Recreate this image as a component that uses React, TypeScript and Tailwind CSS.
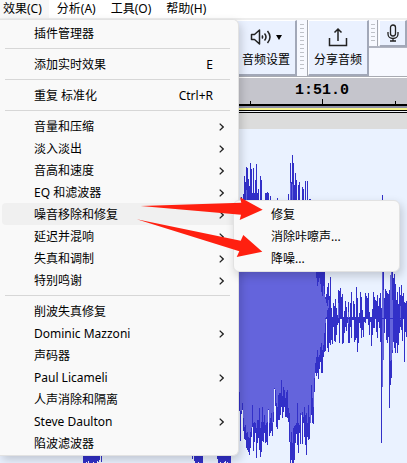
import React from "react";

type Entry = { label: string; shortcut?: string; submenu?: boolean; active?: boolean };

const groups: Entry[][] = [
  [{ label: "插件管理器" }],
  [{ label: "添加实时效果", shortcut: "E" }],
  [{ label: "重复 标准化", shortcut: "Ctrl+R" }],
  [
    { label: "音量和压缩", submenu: true },
    { label: "淡入淡出", submenu: true },
    { label: "音高和速度", submenu: true },
    { label: "EQ 和滤波器", submenu: true },
    { label: "噪音移除和修复", submenu: true, active: true },
    { label: "延迟并混响", submenu: true },
    { label: "失真和调制", submenu: true },
    { label: "特别鸣谢", submenu: true },
  ],
  [
    { label: "削波失真修复" },
    { label: "Dominic Mazzoni", submenu: true },
    { label: "声码器" },
    { label: "Paul Licameli", submenu: true },
    { label: "人声消除和隔离" },
    { label: "Steve Daulton", submenu: true },
    { label: "陷波滤波器" },
  ],
];

// Waveform samples: one entry per pixel column, starting at START.
const START = 239;
const MID = 318;
const peakTop = [
  200, 200, 197, 200, 194, 176, 182, 167, 168, 179, 186, 163, 169, 193, 168, 193, 180, 164, 193, 189, 200, 176, 180, 200,
  200, 200, 193, 193, 192, 193, 200, 196, 200, 200, 200, 200, 200, 200, 198, 200, 200, 200, 200, 200, 200, 200, 200, 200,
  200, 194, 200, 163, 182, 155, 163, 185, 173, 180, 200, 185, 182, 200, 200, 187, 189, 200, 181, 200, 181, 200, 199, 199,
  210, 220, 230, 240, 250, 260, 262, 265, 266, 266, 268, 270, 266, 272, 297, 294, 287, 283, 296, 277, 308, 317, 303, 306,
  299, 308, 315, 290, 291, 288, 297, 294, 317, 311, 301, 307, 317, 302, 317, 303, 292, 317, 301, 304, 317, 287, 298, 317,
  313, 292, 297, 310, 317, 317, 293, 296, 298, 293, 312, 317, 317, 309, 292, 297, 300, 301, 295, 306, 298, 293, 308, 195,
  272, 298, 289, 291, 293, 294, 290, 285, 270, 270, 278, 274, 284, 300, 292, 304, 287, 295, 285, 296, 293, 302, 303, 301,
];
const peakBottom = [
  411, 441, 414, 410, 431, 439, 440, 448, 450, 452, 455, 448, 437, 427, 451, 442, 433, 458, 443, 438, 450, 457, 452, 441,
  442, 433, 443, 442, 445, 410, 436, 433, 431, 436, 422, 389, 406, 427, 429, 420, 420, 415, 407, 418, 412, 407, 417, 417,
  418, 422, 442, 463, 460, 463, 463, 460, 443, 434, 445, 453, 433, 444, 415, 444, 423, 437, 445, 455, 437, 440, 439, 400,
  415, 423, 424, 392, 373, 376, 373, 379, 369, 362, 373, 373, 357, 352, 351, 319, 348, 352, 343, 345, 340, 344, 327, 341,
  342, 335, 325, 323, 343, 319, 319, 344, 343, 333, 327, 331, 323, 343, 343, 327, 338, 320, 320, 342, 340, 338, 352, 343,
  323, 328, 338, 330, 337, 322, 323, 319, 319, 325, 335, 322, 346, 335, 328, 328, 319, 332, 338, 322, 328, 342, 443, 374,
  357, 333, 319, 340, 343, 337, 408, 385, 378, 353, 342, 348, 353, 343, 353, 345, 333, 327, 330, 341, 319, 362, 332, 337,
];
const rmsBottom = [
  392, 411, 411, 403, 418, 427, 425, 433, 432, 437, 438, 432, 428, 405, 423, 422, 423, 428, 420, 420, 408, 428, 422, 407,
  422, 415, 425, 423, 422, 409, 423, 418, 413, 423, 412, 388, 390, 403, 407, 395, 393, 393, 380, 396, 387, 390, 398, 392,
  390, 408, 413, 442, 432, 443, 428, 426, 425, 423, 403, 423, 425, 413, 415, 412, 417, 407, 415, 413, 423, 405, 417, 423,
  385, 398, 407, 378, 363, 357, 350, 357, 355, 347, 343, 350, 345, 333, 323, 317, 310, 308, 306,
];
const rmsTop = [278, 286, 282, 278, 284, 292, 296, 286, 294, 299, 303, 306, 300, 306, 305];

const peaks = peakTop.map((t, i) => `M${START + i} ${t}h1V${peakBottom[i]}h-1z`).join("");
const rms = rmsBottom
  .map((b, i) => {
    const top = i < 77 ? 200 : rmsTop[i - 77] ?? 305;
    return `M${START + i} ${top}h1V${b}h-1z`;
  })
  .join("");
const earlier = [
  [83, 465], [84, 463], [85, 466], [86, 462], [87, 464], [88, 461], [89, 466], [90, 465], [91, 463], [92, 466],
  [93, 462], [94, 464], [95, 463], [96, 466], [97, 461], [98, 462], [99, 460], [101, 462], [192, 459], [194, 461],
  [195, 463], [196, 463], [197, 463], [198, 462], [199, 463], [200, 463], [201, 463], [202, 463], [217, 459],
  [218, 463], [219, 463], [220, 462], [221, 463], [222, 463], [223, 463], [224, 462], [225, 461], [226, 463],
  [227, 462], [228, 463], [229, 463], [230, 463],
]
  .map(([x, b]) => `M${x} 455h1V${b}h-1z`)
  .join("");

function Chevron() {
  return (
    <svg className="h-2 w-[5px]" viewBox="0 0 5 8" fill="none" stroke="#222" strokeWidth="1.3">
      <path d="M0.7 0.6 4.2 4 0.7 7.4" />
    </svg>
  );
}

function Grip() {
  return (
    <div className="flex w-[11px] justify-center border-r border-[#a5a8b0] bg-[#f7f9ff] py-1">
      <div className="w-1 bg-[repeating-linear-gradient(to_bottom,#bfc2c8_0px,#bfc2c8_1px,transparent_1px,transparent_4px)]" />
    </div>
  );
}

const toolButton =
  "flex shrink-0 flex-col items-center border-t border-l border-t-white border-l-white border-r-2 border-b-2 border-r-[#a2a8b8] border-b-[#a2a8b8] bg-[#eaf1ff]";

export default function App() {
  return (
    <div className="relative flex min-h-screen flex-col overflow-hidden bg-white font-['Noto_Sans','Noto_Sans_CJK_SC',sans-serif] text-xs text-black">
      <nav className="flex h-[18px] gap-px bg-white">
        <button className="bg-[#f7f7f7] pr-[7px] pl-[3px] leading-[18px] whitespace-nowrap">效果(C)</button>
        <button className="px-[7px] leading-[18px] whitespace-nowrap">分析(A)</button>
        <button className="px-[7px] leading-[18px] whitespace-nowrap">工具(O)</button>
        <button className="px-[7px] leading-[18px] whitespace-nowrap">帮助(H)</button>
      </nav>

      <div className="flex h-[59px] items-start border-t-2 border-b border-t-[#eeeeee] border-b-[#a9abb2] bg-[#f7f9ff] pl-[236px]">
        <button className={`${toolButton} h-14 w-[61px]`}>
          <span className="mt-1 flex h-6 items-center gap-1">
            <svg className="h-[18px] w-[22px]" viewBox="0 0 22 18" fill="none" stroke="#222" strokeWidth="1.5">
              <path d="M1.5 6.5h3L9.5 2v14l-5-4.500h-3z" strokeLinejoin="round" />
              <path d="M12 7.500q1.200 1.500 0 3M14.500 5.500q3 3.500 0 7M17.500 3q5 6 0 12" />
            </svg>
            <svg className="h-[5px] w-1.5" viewBox="0 0 6 5">
              <path d="M0 0h6L3 5z" fill="#000" />
            </svg>
          </span>
          <span className="leading-[22px] whitespace-nowrap">音频设置</span>
        </button>
        <div className="flex h-14"><Grip /></div>
        <button className={`${toolButton} h-14 w-[61px]`}>
          <span className="mt-1 flex h-6 items-center">
            <svg className="h-5 w-5" viewBox="0 0 20 20" fill="none" stroke="#222" strokeWidth="1.5">
              <path d="M1.500 11v7.500h17V11M10 14V2M6.500 5.500 10 2l3.500 3.500" />
            </svg>
          </span>
          <span className="leading-[22px] whitespace-nowrap">分享音频</span>
        </button>
        <div className="flex min-w-0 flex-1 self-stretch">
          <div className="flex h-7 w-full gap-px border-b-2 border-[#b0b4c0]">
            <Grip />
            <button aria-label="录音" className={`${toolButton} h-[27px] w-7 justify-center`}>
              <svg className="h-[18px] w-3" viewBox="0 0 12 18" fill="none" stroke="#222" strokeWidth="1.300">
                <rect x="3.500" y="1" width="5" height="11" rx="2.500" />
                <path d="M1 8v2a5 4.500 0 0 0 10 0V8M6 14.500V17M3 17h6" />
              </svg>
            </button>
          </div>
        </div>
      </div>

      <div className="flex h-[27px] justify-end border-t border-white bg-[#c5c5cc]">
        <div className="flex w-[170px] flex-col items-center">
          <span className="h-[21px] font-['Liberation_Mono',monospace] text-[15px] leading-[25px] font-bold">1:51.0</span>
          <svg className="h-[5px] w-[170px]" viewBox="0 0 170 5">
            <path d="M13 2h1v3h-1zM85 0h1v5h-1zM158 2h1v3h-1z" />
          </svg>
        </div>
      </div>
      <div className="h-[9px] bg-[linear-gradient(to_bottom,#000_0px_2px,#8e90a8_2px_4px,#f6f48a_4px_6px,#000_6px_7px,#eef1f8_7px_8px,#000_8px_9px)]" />
      <div className="h-4 bg-[#dcdcdc]" />

      <div className="flex flex-1 bg-[#eaf2ff]">
        <svg className="h-[334px] w-[407px] shrink-0" viewBox="0 129 407 334" shapeRendering="crispEdges">
          <path d={peaks + earlier} fill="#3230c8" />
          <path d={rms} fill="#6464dc" />
          <path d="M382 200h1v187h-1zM390 275h1v86h-1zM391 272h1v88h-1zM392 300h1v50h-1zM383 290h1v70h-1zM246 190h1v10h-1zM290 183h1v17h-1zM292 184h1v16h-1zM348 312h1v12h-1zM338 303h1v16h-1zM400 306h1v14h-1z" fill="#6464dc" />
          <path d={`M325 ${MID}h82v1h-82z`} fill="#3230c8" />
        </svg>
      </div>

      <div role="menu" className="absolute top-[19px] left-0 w-[239px] rounded-br-md rounded-tr-md border-t border-r border-b border-[#e2e2e2] bg-[#f9f9f9] pt-0.5 pb-px shadow-[2px_4px_10px_rgba(0,0,0,0.18)]">
        {groups.map((group, g) => (
          <div key={g}>
            {g > 0 && <div className="mr-2 ml-[5px] h-[9px] py-1"><div className="h-px bg-[#d7d7d7]" /></div>}
            {group.map((item) => (
              <button
                key={item.label}
                role="menuitem"
                className={`mx-0.5 flex h-[22px] w-[234px] items-center rounded pt-px pr-3 pl-8 text-left ${item.active ? "bg-[#f0f0f0]" : ""}`}
              >
                <span className="flex-1 whitespace-nowrap">{item.label}</span>
                {item.shortcut && <span className="pr-[11px]">{item.shortcut}</span>}
                {item.submenu && <Chevron />}
              </button>
            ))}
          </div>
        ))}
      </div>

      <div role="menu" className="absolute top-[200px] left-[233px] w-[167px] rounded-md border border-[#e2e2e2] bg-[#f9f9f9] py-0.5 shadow-[2px_4px_10px_rgba(0,0,0,0.18)]">
        {["修复", "消除咔嚓声...", "降噪..."].map((label) => (
          <button key={label} role="menuitem" className="flex h-[22px] w-full items-center pt-px pl-[37px] whitespace-nowrap">
            {label}
          </button>
        ))}
      </div>

      <svg className="pointer-events-none absolute top-[190px] left-[130px] h-20 w-[140px]" viewBox="130 190 140 80" fill="#ff2010">
        <path d="M140.700 206 241.300 202.700 240 197.300 262.700 209.700 239.700 220 241 214.700z" />
        <path d="M136.700 219.300 240.700 240.700 243.300 235 262.300 251.700 236.700 257 239.300 251.300z" />
      </svg>
    </div>
  );
}
